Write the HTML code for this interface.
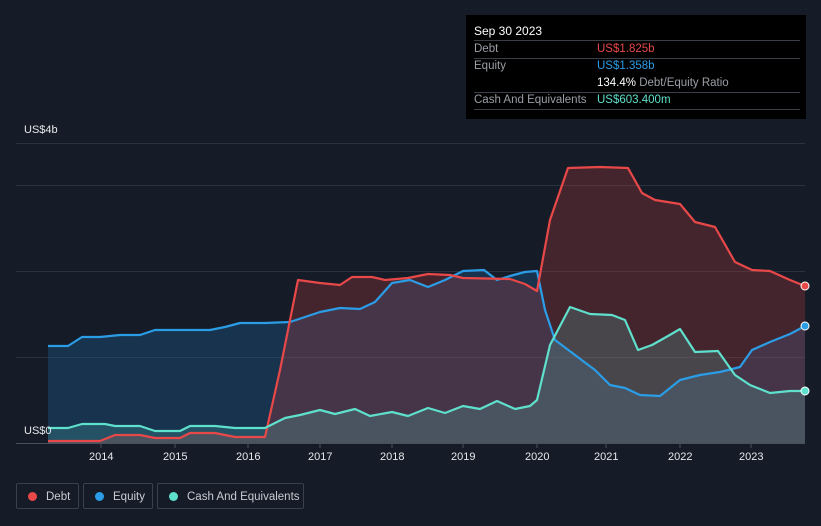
<!DOCTYPE html><html><head><style>
body{margin:0;width:821px;height:526px;background:#151c27;font-family:"Liberation Sans",sans-serif;overflow:hidden;position:relative}
.tt{position:absolute;left:466px;top:15px;width:340px;height:104px;background:#000;color:#fff;font-size:11.5px}
.tt div{position:absolute;left:8px;right:6px;border-bottom:1px solid #3a3f47;height:17px;line-height:17px;color:#9a9ea5}
.tt span{position:absolute;left:123px}
.leg{position:absolute;top:483px;height:26px;border:1px solid #3a404c;border-radius:2px;color:#c8ccd2;font-size:11.5px;line-height:26px;box-sizing:border-box;white-space:nowrap}
.leg i{display:inline-block;width:9px;height:9px;border-radius:50%;margin:0 9px 0 11px;vertical-align:-1px}
.ax{position:absolute;top:451px;color:#e6e8eb;font-size:11px}
</style></head><body>
<div class="tt">
<div style="top:8px;color:#fff;font-size:12px">Sep 30 2023</div>
<div style="top:26px">Debt<span style="color:#e84848">US$1.825b</span></div>
<div style="top:43px;border:none">Equity<span style="color:#2b9de6">US$1.358b</span></div>
<div style="top:60px"><span style="color:#9a9ea5"><b style="color:#fff;font-weight:normal">134.4%</b> Debt/Equity Ratio</span></div>
<div style="top:77px">Cash And Equivalents<span style="color:#5ee0cc">US$603.400m</span></div>
</div>
<div style="position:absolute;left:24px;top:124px;color:#e6e8eb;font-size:11px">US$4b</div>
<svg width="821" height="526" style="position:absolute;left:0;top:0">
<g stroke="#2c323d" stroke-width="1"><line x1="16" x2="805" y1="143.5" y2="143.5"/><line x1="16" x2="805" y1="185.5" y2="185.5"/><line x1="16" x2="805" y1="271.5" y2="271.5"/><line x1="16" x2="805" y1="357.5" y2="357.5"/></g>
<path d="M48,346 68,346 82,337 100,337 120,335 140,335 155,330 210,330 225,327 240,323 265,323 290,322 320,312 340,308 360,309 375,302 392,283 410,280 428,287 445,280 463,271 484,270 497,280 510,276 525,272 537,271 545,310 555,340 575,355 595,370 610,385 625,388 640,395 660,396 680,380 700,375 720,372 740,367 752,350 770,342 790,334 805,326 805,443 48,443Z" fill="#1f5f96" fill-opacity="0.35"/>
<path d="M48,441 100,441 115,435 140,435 155,438 180,438 190,433 215,433 235,437 265,437 280,370 298,280 320,283 340,285 352,277 372,277 385,280 408,278 428,274 450,275 463,278 510,279 525,284 537,291 550,220 568,168 600,167 628,168 642,193 655,200 680,204 695,222 715,227 735,262 752,270 770,271 790,280 805,286 805,443 48,443Z" fill="#b33a3f" fill-opacity="0.3"/>
<path d="M48,428 68,428 82,424 105,424 115,426 140,426 155,431 180,431 190,426 215,426 235,428 265,428 285,418 300,415 320,410 335,414 355,409 370,416 392,412 408,416 428,408 445,413 463,406 480,409 497,401 515,409 530,406 537,400 550,345 570,307 590,314 612,315 625,320 638,350 652,345 668,336 680,329 695,352 718,351 735,375 750,385 770,393 790,391 805,391 805,443 48,443Z" fill="#5ee0cc" fill-opacity="0.18"/>
<g fill="none" stroke-width="2.2" stroke-linejoin="round">
<path d="M48,346 68,346 82,337 100,337 120,335 140,335 155,330 210,330 225,327 240,323 265,323 290,322 320,312 340,308 360,309 375,302 392,283 410,280 428,287 445,280 463,271 484,270 497,280 510,276 525,272 537,271 545,310 555,340 575,355 595,370 610,385 625,388 640,395 660,396 680,380 700,375 720,372 740,367 752,350 770,342 790,334 805,326" stroke="#2b9de6"/>
<path d="M48,441 100,441 115,435 140,435 155,438 180,438 190,433 215,433 235,437 265,437 280,370 298,280 320,283 340,285 352,277 372,277 385,280 408,278 428,274 450,275 463,278 510,279 525,284 537,291 550,220 568,168 600,167 628,168 642,193 655,200 680,204 695,222 715,227 735,262 752,270 770,271 790,280 805,286" stroke="#e84848"/>
<path d="M48,428 68,428 82,424 105,424 115,426 140,426 155,431 180,431 190,426 215,426 235,428 265,428 285,418 300,415 320,410 335,414 355,409 370,416 392,412 408,416 428,408 445,413 463,406 480,409 497,401 515,409 530,406 537,400 550,345 570,307 590,314 612,315 625,320 638,350 652,345 668,336 680,329 695,352 718,351 735,375 750,385 770,393 790,391 805,391" stroke="#5ee0cc"/>
</g>
<line x1="16" x2="805" y1="443.5" y2="443.5" stroke="#4a505b"/>
<g stroke="#4a505b"><line x1="101" x2="101" y1="443" y2="448"/><line x1="175" x2="175" y1="443" y2="448"/><line x1="248" x2="248" y1="443" y2="448"/><line x1="320" x2="320" y1="443" y2="448"/><line x1="392" x2="392" y1="443" y2="448"/><line x1="463" x2="463" y1="443" y2="448"/><line x1="537" x2="537" y1="443" y2="448"/><line x1="606" x2="606" y1="443" y2="448"/><line x1="680" x2="680" y1="443" y2="448"/><line x1="751" x2="751" y1="443" y2="448"/></g>
<circle cx="805" cy="286" r="4" fill="#e84848" stroke="#fff" stroke-width="1"/>
<circle cx="805" cy="326" r="4" fill="#2b9de6" stroke="#fff" stroke-width="1"/>
<circle cx="805" cy="391" r="4" fill="#5ee0cc" stroke="#fff" stroke-width="1"/>
</svg>
<div style="position:absolute;left:24px;top:425px;color:#e6e8eb;font-size:11px">US$0</div>
<div class="ax" style="left:89px">2014</div><div class="ax" style="left:163px">2015</div><div class="ax" style="left:236px">2016</div><div class="ax" style="left:308px">2017</div><div class="ax" style="left:380px">2018</div><div class="ax" style="left:451px">2019</div><div class="ax" style="left:525px">2020</div><div class="ax" style="left:594px">2021</div><div class="ax" style="left:668px">2022</div><div class="ax" style="left:739px">2023</div>
<div class="leg" style="left:16px;width:63px"><i style="background:#e84848"></i>Debt</div>
<div class="leg" style="left:83px;width:70px"><i style="background:#2b9de6"></i>Equity</div>
<div class="leg" style="left:157px;width:147px"><i style="background:#5ee0cc"></i>Cash And Equivalents</div>
</body></html>
